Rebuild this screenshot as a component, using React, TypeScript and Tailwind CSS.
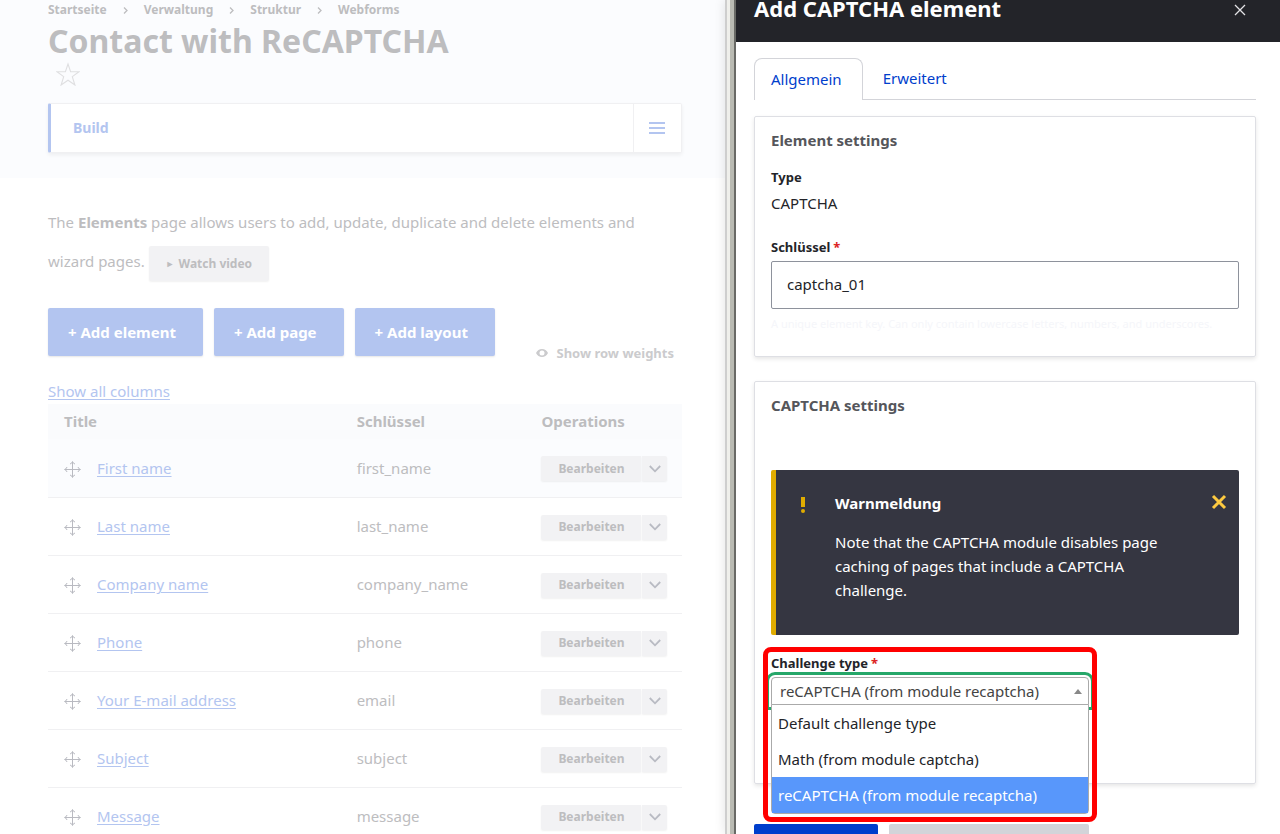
import React from "react";

const rows = [
  { title: "First name", key: "first_name" },
  { title: "Last name", key: "last_name" },
  { title: "Company name", key: "company_name" },
  { title: "Phone", key: "phone" },
  { title: "Your E-mail address", key: "email" },
  { title: "Subject", key: "subject" },
  { title: "Message", key: "message" },
];

const crumbs = ["Startseite", "Verwaltung", "Struktur", "Webforms"];

const options = [
  "Default challenge type",
  "Math (from module captcha)",
  "reCAPTCHA (from module recaptcha)",
];

function MoveIcon() {
  return (
    <svg width="17" height="17" viewBox="0 0 17 17" fill="none" stroke="#b9bac1" strokeWidth="1" aria-hidden="true">
      <path d="M8.5 1v15M1 8.5h15" />
      <path d="M6 3Q8 2.500 8.500.5Q9 2.500 11 3M6 14Q8 14.500 8.500 16.500Q9 14.500 11 14M3 6Q2.500 8 .5 8.500Q2.500 9 3 11M14 6Q14.500 8 16.500 8.500Q14.500 9 14 11" />
    </svg>
  );
}

function Chevron() {
  return (
    <svg width="12" height="8" viewBox="0 0 12 8" fill="none" stroke="#b9bbc3" strokeWidth="1.800" aria-hidden="true">
      <path d="M.8 1 6 6.300 11.200 1" />
    </svg>
  );
}

function Required() {
  return <span className="ml-[3px] text-[#dc2323]">*</span>;
}

function FormPage() {
  return (
    <main className="min-w-0 flex-1 text-[15px] text-[#bdbdbf]">
      <header className="bg-[#fbfcfe] pr-[43px] pb-[25px] pl-12">
        <nav aria-label="Breadcrumb">
          <ol className="flex h-5 items-center text-[12px] font-bold">
            {crumbs.map((crumb, i) => (
              <li key={crumb} className="flex items-center">
                {i > 0 && (
                  <svg className="mx-4" width="5" height="7" viewBox="0 0 5 7" fill="none" stroke="#bdbdbf" strokeWidth="1.300" aria-hidden="true">
                    <path d="M1 .5l3 3-3 3" />
                  </svg>
                )}
                <a href="#">{crumb}</a>
              </li>
            ))}
          </ol>
        </nav>
        <h1 className="mt-px text-[32px] leading-10 font-bold">Contact with ReCAPTCHA</h1>
        <button type="button" aria-label="Add to shortcuts" className="mt-px ml-2 block">
          <svg width="24" height="24" viewBox="0 0 24 24" fill="none" stroke="#dfdfe1" strokeWidth="1.100" aria-hidden="true">
            <path d="M12 2l2.600 7.700H23l-6.700 4.900 2.600 8.400L12 18.200 5.100 23l2.600-8.400L1 9.700h8.400z" />
          </svg>
        </button>
        <div className="mt-[17px] flex h-[50px] items-stretch rounded-xs border border-l-3 border-[#f0f0f2] border-l-[#b3c5f0] bg-white shadow-[0_2px_4px_rgba(0,0,0,0.06)]">
          <a href="#" className="flex flex-1 items-center pb-px pl-[22px] text-[14px] font-bold text-[#b3c5f0]">Build</a>
          <button type="button" aria-label="Tabs" className="flex w-12 items-center justify-center border-l border-[#f0f0f2] pr-px">
            <svg width="16" height="12" viewBox="0 0 16 12" fill="#b3c5f0" aria-hidden="true">
              <path d="M0 0h16v2H0zM0 5h16v2H0zM0 10h16v2H0z" />
            </svg>
          </button>
        </div>
      </header>

      <div className="pt-8 pr-[43px] pl-12">
        <p className="leading-6">
          The <strong>Elements</strong> page allows users to add, update, duplicate and delete elements and wizard pages.{" "}
          <button type="button" className="mt-3 inline-flex h-[35px] items-center rounded-xs bg-[#f2f2f4] px-[17px] align-baseline text-[12px] font-bold shadow-[0_1px_2px_rgba(0,0,0,0.06)]">
            <span className="mr-1 text-[9px]">►</span>Watch video
          </button>
        </p>
        <div className="mt-[27px] flex items-start">
          <div className="flex gap-[11px] font-bold text-white">
            <button type="button" className="h-12 rounded-xs bg-[#b3c5f0] pr-[27px] pl-5 shadow-[0_1px_2px_rgba(0,0,0,0.1)]">+ Add element</button>
            <button type="button" className="h-12 rounded-xs bg-[#b3c5f0] pr-[27px] pl-5 shadow-[0_1px_2px_rgba(0,0,0,0.1)]">+ Add page</button>
            <button type="button" className="h-12 rounded-xs bg-[#b3c5f0] pr-[27px] pl-5 shadow-[0_1px_2px_rgba(0,0,0,0.1)]">+ Add layout</button>
          </div>
          <button type="button" className="mt-[34px] mr-2 ml-auto flex items-center gap-2 text-[13px] leading-[22px] font-bold text-[#cbcbcd]">
            <svg width="12" height="8" viewBox="0 0 12 8" aria-hidden="true">
              <path fill="#cbcbcd" fillRule="evenodd" d="M0 4Q2 0 6 0t6 4Q10 8 6 8T0 4zm6 2.500a2.500 2.500 0 1 0 0-5 2.500 2.500 0 0 0 0 5z" />
            </svg>
            Show row weights
          </button>
        </div>
        <a href="#" className="mt-[15px] block w-max leading-6 text-[#b3c5f0] underline underline-offset-2">Show all columns</a>
        <table className="mt-px w-full table-fixed border-collapse text-left">
          <thead>
            <tr className="h-[35px] bg-[#fafbfd]">
              <th className="w-[46%] pl-4">Title</th>
              <th className="w-[29%] pl-[17px]">Schlüssel</th>
              <th className="w-[25%] pl-[18px]">Operations</th>
            </tr>
          </thead>
          <tbody>
            {rows.map((row) => (
              <tr key={row.key} className="h-[58px] border-b border-[#f0f0f2] first:bg-[#fbfcfe]">
                <td className="pl-4">
                  <div className="flex items-center gap-4">
                    <span className="pt-[3px]">
                      <MoveIcon />
                    </span>
                    <a href="#" className="leading-6 text-[#b3c5f0] underline underline-offset-2">{row.title}</a>
                  </div>
                </td>
                <td className="pl-[17px] leading-6">{row.key}</td>
                <td className="pt-[2px] pl-[18px]">
                  <div className="flex w-[126px] gap-px text-[12px] font-bold">
                    <button type="button" className="h-[25px] flex-1 rounded-l-xs bg-[#f2f2f4] shadow-[0_1px_2px_rgba(0,0,0,0.06)]">Bearbeiten</button>
                    <button type="button" aria-label="Weitere Aktionen" className="flex h-[25px] w-[25px] items-center justify-center rounded-r-xs bg-[#f2f2f4] shadow-[0_1px_2px_rgba(0,0,0,0.06)]">
                      <Chevron />
                    </button>
                  </div>
                </td>
              </tr>
            ))}
          </tbody>
        </table>
      </div>
    </main>
  );
}

function ElementDialog() {
  return (
    <aside role="dialog" aria-labelledby="dialog-title" className="w-[42.5%] shrink-0 bg-white text-[15px] text-[#232429]">
      <header className="flex h-[42px] items-start justify-between bg-[#232429] pr-[34px] pl-[18px]">
        <h2 id="dialog-title" className="text-[22px] leading-4 font-bold text-white">Add CAPTCHA element</h2>
        <button type="button" aria-label="Schließen" className="mt-1">
          <svg width="12" height="12" viewBox="0 0 12 12" fill="none" stroke="#e3e3e6" strokeWidth="1.300" aria-hidden="true">
            <path d="M1 1l10 10M11 1 1 11" />
          </svg>
        </button>
      </header>
      <div className="pt-4 pr-6 pl-[18px]">
        <nav className="flex h-[42px] text-[#003ecc]">
          <a href="#" className="flex items-center rounded-t-lg border border-b-0 border-[#d3d4d9] pr-5 pl-4">Allgemein</a>
          <a href="#" className="flex flex-1 items-center border-b border-[#d3d4d9] px-5">Erweitert</a>
        </nav>

        <section className="mt-4 h-[241px] rounded-xs border border-[#dedfe4] px-4 pt-[11px] shadow-[0_2px_4px_rgba(0,0,0,0.1)]">
          <h3 className="leading-6 font-bold text-[#55565b]">Element settings</h3>
          <p className="mt-[15px] text-[13px] leading-[21px] font-bold">Type</p>
          <p className="mt-[3px] leading-6">CAPTCHA</p>
          <label htmlFor="element-key" className="mt-[22px] block text-[13px] leading-[21px] font-bold">
            Schlüssel<Required />
          </label>
          <input id="element-key" type="text" defaultValue="captcha_01" className="mt-[3px] block h-12 w-full rounded-xs border border-[#8e929c] px-[15px] pb-[3px]" />
          <p className="mt-[6px] text-[11px] leading-[18px] whitespace-nowrap text-[#f5f6fa]">
            A unique element key. Can only contain lowercase letters, numbers, and underscores.
          </p>
        </section>

        <section className="mt-6 h-[403px] rounded-xs border border-[#dedfe4] px-4 pt-[11px] shadow-[0_2px_4px_rgba(0,0,0,0.1)]">
          <h3 className="leading-6 font-bold text-[#55565b]">CAPTCHA settings</h3>
          <div role="alert" className="mt-[53px] flex h-[165px] items-start rounded-xs border-l-5 border-[#e0ac00] bg-[#353641] pt-[21px] pr-3 text-white">
            <svg className="mt-[6px] ml-[25px]" width="4" height="16" viewBox="0 0 4 16" fill="#e0ac00" aria-hidden="true">
              <path d="M0 0h4v10H0z" />
              <circle cx="2" cy="14" r="2" />
            </svg>
            <div className="ml-[30px] min-w-0 flex-1 pr-5">
              <h4 className="leading-6 font-bold">Warnmeldung</h4>
              <p className="mt-[15px] leading-6">
                Note that the CAPTCHA module disables page caching of pages that include a CAPTCHA challenge.
              </p>
            </div>
            <button type="button" aria-label="Meldung schließen" className="mt-[3px]">
              <svg width="16" height="16" viewBox="0 0 16 16" fill="none" stroke="#fdca40" strokeWidth="3" aria-hidden="true">
                <path d="M2 2l12 12M14 2 2 14" />
              </svg>
            </button>
          </div>

          <div className="relative mt-[18px] w-[318px]">
            <label htmlFor="challenge-type" className="block text-[13px] leading-[21px] font-bold">
              Challenge type<Required />
            </label>
            <div className="relative mt-[3px] rounded-t-sm outline-3 outline-offset-2 outline-[#26a769]">
              <select id="challenge-type" defaultValue={options[2]} className="block h-7 w-full appearance-none rounded-t-sm border border-[#aaaaaa] bg-white px-2 text-[#444444]">
                {options.map((option) => (
                  <option key={option}>{option}</option>
                ))}
              </select>
              <svg className="pointer-events-none absolute top-[12px] right-[7px]" width="8" height="5" viewBox="0 0 8 5" fill="#888888" aria-hidden="true">
                <path d="M0 5l4-5 4 5z" />
              </svg>
            </div>
            <ul role="listbox" aria-label="Challenge type" className="absolute top-[51px] left-0 w-full rounded-b-sm border border-[#aaaaaa] bg-white">
              {options.map((option, i) => (
                <li
                  key={option}
                  role="option"
                  aria-selected={i === 2}
                  className="px-[6px] leading-9 aria-selected:bg-[#5897fb] aria-selected:text-white"
                >
                  {option}
                </li>
              ))}
            </ul>
            <div className="pointer-events-none absolute -top-[6px] -left-2 h-[175px] w-[334px] rounded-lg border-5 border-[#ff0000]" />
          </div>
        </section>

        <div className="mt-10 flex gap-[11px]">
          <button type="button" aria-label="Speichern" className="h-12 w-[124px] rounded-xs bg-[#003ecc]" />
          <button type="button" aria-label="Speichern und Element hinzufügen" className="h-12 w-[200px] rounded-xs bg-[#d3d4d9]" />
        </div>
      </div>
    </aside>
  );
}

export default function App() {
  return (
    <div className="flex h-screen overflow-hidden bg-white font-['Noto_Sans',sans-serif]">
      <FormPage />
      <div className="flex w-[11px] shrink-0 shadow-[0_0_12px_rgba(0,0,0,0.12)]">
        <span className="w-[2px] bg-[#cecece]" />
        <span className="w-[3px] bg-[#efefeb]" />
        <span className="w-[4px] bg-[#babbb3]" />
        <span className="w-[2px] bg-[#696a66]" />
      </div>
      <ElementDialog />
    </div>
  );
}
